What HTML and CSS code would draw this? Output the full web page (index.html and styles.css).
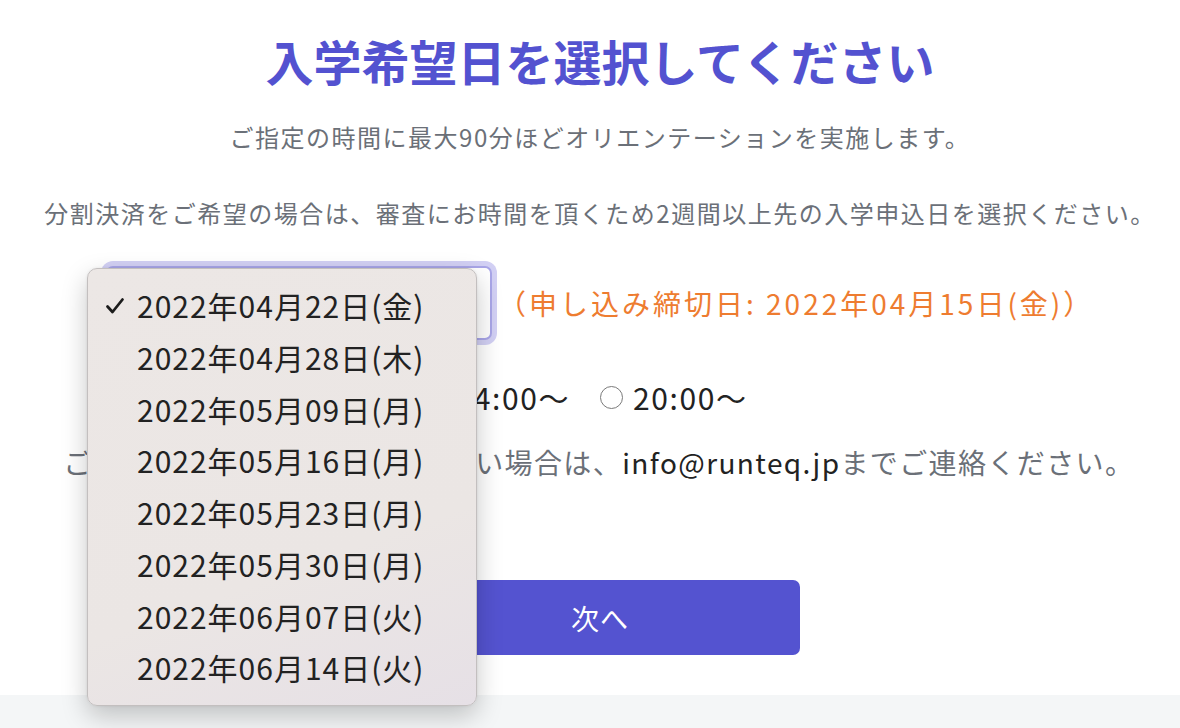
FILE: index.html
```html
<!DOCTYPE html>
<html lang="ja">
<head>
<meta charset="utf-8">
<title>入学希望日を選択してください</title>
<link rel="stylesheet" href="styles.css">
</head>
<body>
<main class="page">
  <h1 class="title">入学希望日を選択してください</h1>
  <p class="note note-first">ご指定の時間に最大90分ほどオリエンテーションを実施します。</p>
  <p class="note note-second">分割決済をご希望の場合は、審査にお時間を頂くため2週間以上先の入学申込日を選択ください。</p>

  <div class="date-row">
    <div class="select-wrap">
      <div class="select">
        <span class="select-value">2022年04月22日(金)</span>
      </div>
      <ul class="menu">
        <li class="menu-item selected">
          <svg class="check" viewBox="0 0 20 18" width="20" height="18"><path d="M2.5 9.5 L7.5 15 L17.5 2.5" fill="none" stroke="#1c1c1c" stroke-width="2.8" stroke-linecap="round" stroke-linejoin="round"/></svg>
          2022年04月22日(金)
        </li>
        <li class="menu-item">2022年04月28日(木)</li>
        <li class="menu-item">2022年05月09日(月)</li>
        <li class="menu-item">2022年05月16日(月)</li>
        <li class="menu-item">2022年05月23日(月)</li>
        <li class="menu-item">2022年05月30日(月)</li>
        <li class="menu-item">2022年06月07日(火)</li>
        <li class="menu-item">2022年06月14日(火)</li>
      </ul>
    </div>
    <span class="deadline">（申し込み締切日: 2022年04月15日(金)）</span>
  </div>

  <div class="time-row">
    <label class="time-option"><span class="radio"></span>14:00～</label>
    <label class="time-option"><span class="radio"></span>20:00～</label>
  </div>

  <p class="contact">ご希望の日程でご都合がつかない場合は、<span class="mail">info@runteq.jp</span>までご連絡ください。</p>

  <button class="next" type="button">次へ</button>
</main>
<footer class="footer"></footer>
</body>
</html>
```

FILE: styles.css
```css
* { box-sizing: border-box; }

html, body {
  margin: 0;
  padding: 0;
  background: #ffffff;
  font-family: "Noto Sans CJK JP", "Noto Sans", sans-serif;
  height: 100%;
  overflow: hidden;
}

.page {
  padding: 30px 0 0 20px;
  display: flex;
  flex-direction: column;
  align-items: center;
}

.title {
  margin: 0;
  font-size: 48px;
  line-height: 60px;
  font-weight: 700;
  color: #5352d0;
  white-space: nowrap;
}

.note {
  margin: 0;
  font-size: 24px;
  line-height: 36px;
  letter-spacing: 1.5px;
  color: #6b7078;
  white-space: nowrap;
}

.note-first { margin-top: 29px; }
.note-second { margin-top: 40px; }

.date-row {
  margin-top: 35px;
  display: flex;
  align-items: center;
  gap: 6px;
  align-self: flex-start;
  margin-left: 86px;
}

.select-wrap {
  position: relative;
}

.select {
  width: 386px;
  height: 74px;
  border: 2px solid #a9a6e8;
  border-radius: 7px;
  box-shadow: 0 0 0 5px #d2d0f4;
  background: #fff;
  display: flex;
  align-items: center;
  padding-left: 20px;
  font-size: 28px;
  color: #222;
}

.menu {
  position: absolute;
  left: -19px;
  top: 2px;
  width: 390px;
  height: 438px;
  margin: 0;
  padding: 11px 0 0 0;
  list-style: none;
  background: linear-gradient(160deg, #ece7e5 0%, #ebe6e4 65%, #e6e0e6 100%);
  border: 1px solid #c3bfbf;
  border-radius: 10px;
  box-shadow: 0 10px 26px rgba(0, 0, 0, 0.22), 0 0 3px rgba(0,0,0,0.08);
  z-index: 10;
}

.menu-item {
  position: relative;
  height: 51.75px;
  line-height: 51.75px;
  padding-left: 49px;
  font-size: 30px;
  letter-spacing: 1px;
  color: #222222;
  white-space: nowrap;
}

.check {
  position: absolute;
  left: 17px;
  top: 17px;
}

.deadline {
  font-size: 28px;
  line-height: 40px;
  letter-spacing: 3px;
  color: #ee7c30;
  white-space: nowrap;
}

.time-row {
  margin-top: 37px;
  display: flex;
  gap: 30px;
  margin-left: -30px;
}

.time-option {
  display: flex;
  align-items: center;
  gap: 10px;
  font-size: 30px;
  line-height: 40px;
  letter-spacing: 1.6px;
  color: #222;
}

.radio {
  width: 23px;
  height: 23px;
  border: 1.5px solid #7a7a7a;
  border-radius: 50%;
  background: #fff;
}

.contact {
  margin: 25px 0 0 -2px;
  font-size: 28px;
  line-height: 40px;
  letter-spacing: 1.4px;
  color: #6b7078;
  white-space: nowrap;
}

.mail { color: #222; }

.next {
  margin-top: 98px;
  width: 400px;
  height: 75px;
  border: none;
  border-radius: 7px;
  background: #5453d0;
  color: #fff;
  font-family: inherit;
  font-size: 28px;
  letter-spacing: 1px;
}

.footer {
  margin-top: 40px;
  height: 33px;
  background: #f4f6f7;
}
```
